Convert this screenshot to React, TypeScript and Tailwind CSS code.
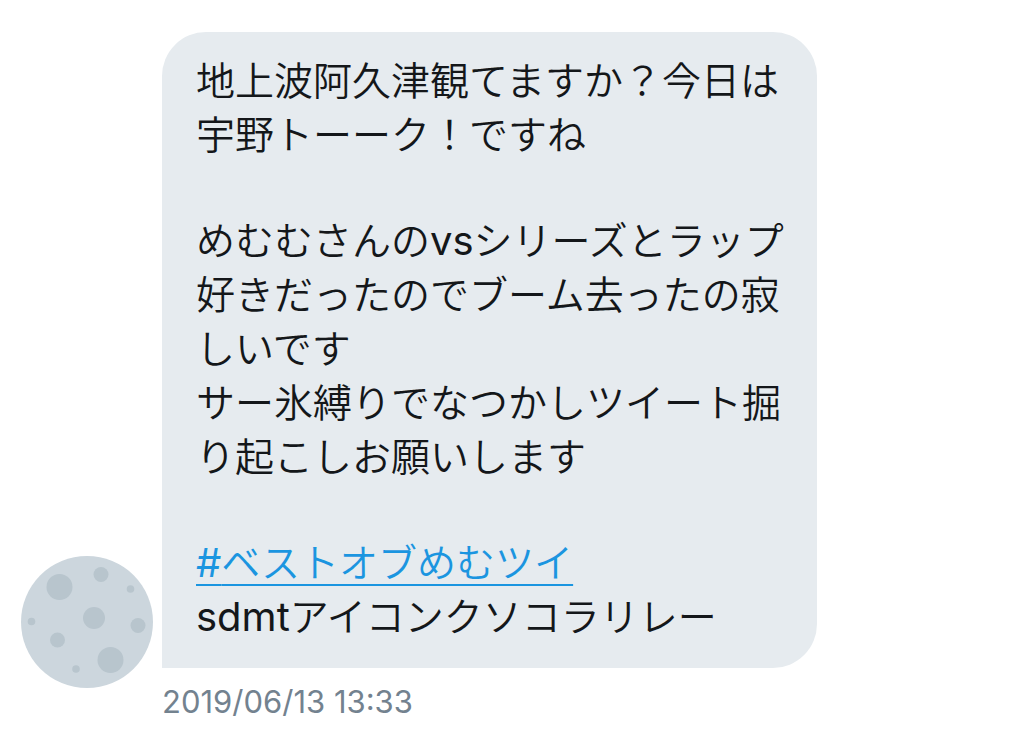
import React from "react";

const MoonAvatar = ({ className }: { className?: string }) => {
  return (
    <svg viewBox="0 0 132 132" className={className} role="img" aria-label="avatar">
      <circle cx="66" cy="66" r="66" fill="#ccd6dd" />
      <g fill="#b8c5cd">
        <circle cx="38.5" cy="31" r="13" />
        <circle cx="80" cy="18.5" r="7.5" />
        <circle cx="109.5" cy="33" r="3.8" />
        <circle cx="73" cy="62" r="11" />
        <circle cx="117" cy="69.5" r="7.5" />
        <circle cx="10.5" cy="65.5" r="3.8" />
        <circle cx="36.5" cy="84" r="7.5" />
        <circle cx="89.5" cy="104" r="13" />
        <circle cx="55" cy="113" r="3.8" />
      </g>
    </svg>
  );
};

const Latin = ({ children }: { children: React.ReactNode }) => {
  return <span className="font-normal text-[40px]">{children}</span>;
};

const Bubble = ({ children }: { children: React.ReactNode }) => {
  return (
    <div className="max-w-[655px] bg-[#e6ebef] rounded-[44px] rounded-bl-none pt-[22px] pb-6 pl-[34px] pr-[28px] flex flex-col gap-[52px] text-[39px] leading-[54px] font-[350] text-[#14171a]">
      {children}
    </div>
  );
};

export default function App() {
  return (
    <main
      lang="ja"
      className="min-h-screen bg-white pt-8 px-[21px] font-['Inter','Noto_Sans_CJK_JP',sans-serif]"
    >
      <article className="flex items-end gap-[9px]">
        <MoonAvatar className="w-[132px] h-[132px] shrink-0 mb-8" />
        <div className="flex-1 min-w-0">
          <Bubble>
            <p>
              地上波阿久津観てますか？今日は
              <br />
              宇野トーーク！ですね
            </p>
            <p>
              めむむさんの<Latin>vs</Latin>シリーズとラップ
              <br />
              好きだったのでブーム去ったの寂しいです
              <br />
              サー氷縛りでなつかしツイート掘り起こしお願いします
            </p>
            <p>
              <a
                href="#hashtag"
                className="text-[#1b95e0] underline decoration-2 underline-offset-[7px] [text-decoration-skip-ink:none]"
              >
                <Latin>#</Latin>ベストオブめむツイ
              </a>
              <br />
              <Latin>sdmt</Latin>アイコンクソコラリレー
            </p>
          </Bubble>
          <time
            dateTime="2019-06-13T13:33"
            className="block mt-4 text-[31px] leading-9 text-[#73828f]"
          >
            2019/06/13 13:33
          </time>
        </div>
      </article>
    </main>
  );
}
